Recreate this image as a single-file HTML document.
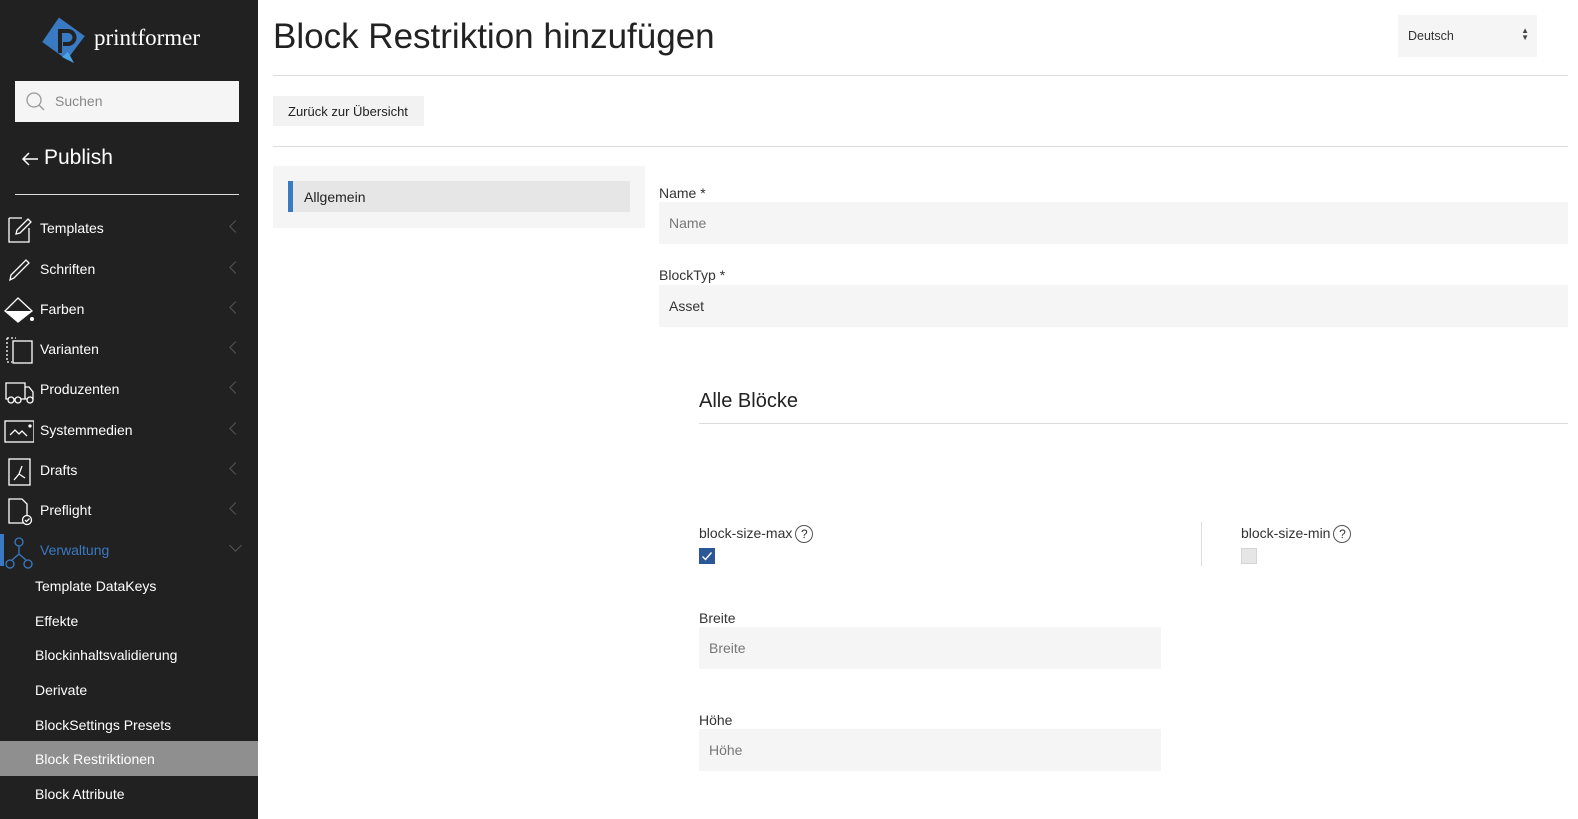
<!DOCTYPE html>
<html><head><meta charset="utf-8"><style>
*{box-sizing:border-box;margin:0;padding:0}
body{width:1578px;height:819px;overflow:hidden;background:#fff;font-family:"Liberation Sans",sans-serif;position:relative;color:#333}
.sb{position:absolute;left:0;top:0;width:258px;height:819px;background:#212121;color:#fff}
.abs{position:absolute}
.item{position:absolute;left:0;width:258px;height:36px;font-size:14px;}
.item .t{position:absolute;left:40px;top:10px}
.item .ch{position:absolute;right:18px;top:12px;width:9px;height:9px;border-left:1.3px solid #555;border-bottom:1.3px solid #555;transform:rotate(45deg)}
.item svg{position:absolute;left:4px;top:4px}
.sub{position:absolute;left:0;width:258px;height:35px;font-size:14px;padding:10px 0 0 35px}
.inp{position:absolute;background:#f5f5f5;font-size:14px;color:#777;padding:13px 10px}
.lbl{position:absolute;font-size:14px;color:#333}
.q{display:inline-block;width:18px;height:18px;border:1px solid #555;border-radius:50%;font-size:12px;text-align:center;line-height:16px;vertical-align:middle;margin-left:3px}
</style></head><body>
<div class="sb">
  <svg class="abs" style="left:40px;top:15px" width="48" height="48" viewBox="0 0 48 48">
    <path d="M22 2 L45 24 L24 45 L2 24 Z" fill="#3a7ac2" transform="rotate(-8 24 24)"/>
    <path d="M28 37 L34 48 L22 42 Z" fill="#4aa3e6"/>
    <path d="M20 38 V16 h8 a6.5 6.5 0 0 1 0 13 h-5" fill="none" stroke="#222" stroke-width="4"/>
  </svg>
  <div class="abs" style="left:94px;top:25px;font-family:'Liberation Serif',serif;font-size:23px;color:#fff">printformer</div>
  <div class="abs" style="left:15px;top:81px;width:224px;height:41px;background:#f5f5f5;color:#888;font-size:14px;padding:12px 0 0 40px">Suchen
    <svg class="abs" style="left:10px;top:10px" width="22" height="22" viewBox="0 0 22 22"><circle cx="9" cy="9" r="7" fill="none" stroke="#999" stroke-width="1.3"/><path d="M14 14 L19 19" stroke="#999" stroke-width="1.3"/></svg>
  </div>
  <svg class="abs" style="left:20px;top:150px" width="20" height="18" viewBox="0 0 20 18"><path d="M18 9H3M9 3L3 9l6 6" fill="none" stroke="#fff" stroke-width="1.5"/></svg>
  <div class="abs" style="left:44px;top:146px;font-size:21px;color:#fff">Publish</div>
  <div class="abs" style="left:15px;top:194px;width:224px;height:1px;background:#ddd"></div>

  <div class="item" style="top:210px"><svg width="30" height="30" viewBox="0 0 30 30" fill="none" stroke="#fff" stroke-width="1.3"><path d="M5 4h13M5 4v24h20V14"/><path d="M12 20l1-4 11-11 3 3-11 11z"/></svg><span class="t">Templates</span><i class="ch"></i></div>
  <div class="item" style="top:251px"><svg width="30" height="30" viewBox="0 0 30 30" fill="none" stroke="#fff" stroke-width="1.3"><path d="M6 25l1-5 15-15 3 3-15 15z"/></svg><span class="t">Schriften</span><i class="ch"></i></div>
  <div class="item" style="top:291px"><svg width="30" height="30" viewBox="0 0 30 30"><path d="M1 16 L14 3 L28 16 L14 27 Z" fill="none" stroke="#fff" stroke-width="1.3"/><path d="M2 16 H28 L14 27 Z" fill="#fff"/><circle cx="28" cy="24" r="2" fill="#fff"/></svg><span class="t">Farben</span><i class="ch"></i></div>
  <div class="item" style="top:331px"><svg width="30" height="30" viewBox="0 0 30 30" fill="none" stroke="#fff" stroke-width="1.3"><path d="M3 3h9M3 3v24h5" stroke-dasharray="2 2"/><rect x="9" y="6" width="19" height="22"/></svg><span class="t">Varianten</span><i class="ch"></i></div>
  <div class="item" style="top:371px"><svg width="30" height="30" viewBox="0 0 30 30" fill="none" stroke="#fff" stroke-width="1.3"><path d="M2 8h19v16H2zM21 12h4l4 5v7h-8"/><circle cx="7" cy="25" r="3" fill="#212121"/><circle cx="14" cy="25" r="3" fill="#212121"/><circle cx="26" cy="25" r="3" fill="#212121"/></svg><span class="t">Produzenten</span><i class="ch"></i></div>
  <div class="item" style="top:412px"><svg width="30" height="30" viewBox="0 0 30 30" fill="none" stroke="#fff" stroke-width="1.3"><rect x="1" y="5" width="29" height="21"/><path d="M6 19l5-5 4 4 3-3 5 5"/><circle cx="26" cy="10" r="1" fill="#fff"/></svg><span class="t">Systemmedien</span><i class="ch"></i></div>
  <div class="item" style="top:452px"><svg width="30" height="30" viewBox="0 0 30 30" fill="none" stroke="#fff" stroke-width="1.3"><rect x="5" y="3" width="21" height="26"/><path d="M10 24l5-6 3-8M15 18l6 4"/></svg><span class="t">Drafts</span><i class="ch"></i></div>
  <div class="item" style="top:492px"><svg width="30" height="30" viewBox="0 0 30 30" fill="none" stroke="#fff" stroke-width="1.3"><path d="M20 27H5V3h13l5 5v11"/><circle cx="23" cy="24" r="4.5"/><path d="M21 24l1.5 1.5 3-3"/></svg><span class="t">Preflight</span><i class="ch"></i></div>
  <div class="item" style="top:532px"><div class="abs" style="left:0;top:2px;width:4px;height:32px;background:#3a7ac2"></div><svg width="30" height="34" viewBox="0 0 30 34" fill="none" stroke="#3a7ac2" stroke-width="1.3"><circle cx="15" cy="6" r="4"/><circle cx="6" cy="28" r="4"/><circle cx="24" cy="28" r="4"/><path d="M15 10v8M15 18l-7 6M15 18l7 6"/></svg><span class="t" style="color:#3a7ac2">Verwaltung</span><i class="ch" style="transform:rotate(-45deg);top:9px"></i></div>

  <div class="sub" style="top:568px">Template DataKeys</div>
  <div class="sub" style="top:603px">Effekte</div>
  <div class="sub" style="top:637px">Blockinhaltsvalidierung</div>
  <div class="sub" style="top:672px">Derivate</div>
  <div class="sub" style="top:707px">BlockSettings Presets</div>
  <div class="sub" style="top:741px;background:#8f8f8f">Block Restriktionen</div>
  <div class="sub" style="top:776px">Block Attribute</div>
</div>

<div class="abs" style="left:273px;top:17px;font-size:35px;color:#222">Block Restriktion hinzufügen</div>
<div class="abs" style="left:1398px;top:15px;width:139px;height:42px;background:#f5f5f5;font-size:12.5px;color:#333;padding:14px 0 0 10px">Deutsch<span class="abs" style="right:8px;top:12px;font-size:8px;line-height:7px;color:#444">▲<br>▼</span></div>
<div class="abs" style="left:273px;top:75px;width:1295px;height:1px;background:#ddd"></div>
<div class="abs" style="left:273px;top:96px;width:151px;height:30px;background:#f2f2f2;font-size:13px;color:#222;padding:8px 0 0 15px">Zurück zur Übersicht</div>
<div class="abs" style="left:273px;top:146px;width:1295px;height:1px;background:#ddd"></div>

<div class="abs" style="left:273px;top:166px;width:372px;height:62px;background:#f5f5f5"></div>
<div class="abs" style="left:288px;top:181px;width:342px;height:31px;background:#e6e6e6;border-left:5px solid #3a7ac2;font-size:14px;color:#222;padding:8px 0 0 11px">Allgemein</div>

<div class="lbl" style="left:659px;top:185px">Name *</div>
<div class="inp" style="left:659px;top:202px;width:909px;height:42px">Name</div>
<div class="lbl" style="left:659px;top:267px">BlockTyp *</div>
<div class="inp" style="left:659px;top:285px;width:909px;height:42px;color:#333">Asset</div>

<div class="abs" style="left:699px;top:390px;font-size:20px;color:#222">Alle Blöcke</div>
<div class="abs" style="left:699px;top:423px;width:869px;height:1px;background:#ddd"></div>

<div class="lbl" style="left:699px;top:525px">block-size-max<span class="q">?</span></div>
<div class="abs" style="left:699px;top:548px;width:16px;height:16px;background:#2b5797"><svg width="16" height="16" viewBox="0 0 16 16"><path d="M3.5 8.5l3 3 6-7" fill="none" stroke="#fff" stroke-width="1.4"/></svg></div>
<div class="abs" style="left:1201px;top:522px;width:1px;height:44px;background:#ddd"></div>
<div class="lbl" style="left:1241px;top:525px">block-size-min<span class="q">?</span></div>
<div class="abs" style="left:1241px;top:548px;width:16px;height:16px;background:#e6e6e6;border:1px solid #d5d5d5"></div>

<div class="lbl" style="left:699px;top:610px">Breite</div>
<div class="inp" style="left:699px;top:627px;width:462px;height:42px">Breite</div>
<div class="lbl" style="left:699px;top:712px">Höhe</div>
<div class="inp" style="left:699px;top:729px;width:462px;height:42px">Höhe</div>
</body></html>
